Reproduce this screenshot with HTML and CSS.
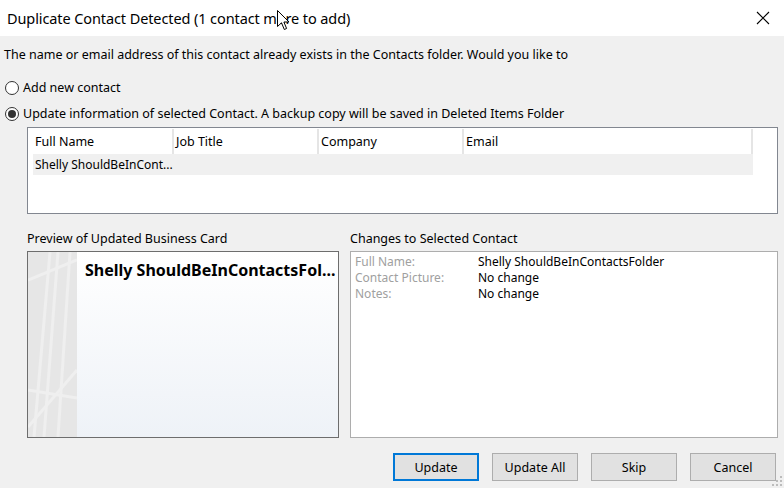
FILE: index.html
```html
<!DOCTYPE html>
<html>
<head>
<meta charset="utf-8">
<link rel="stylesheet" href="styles.css">
</head>
<body>
<div class="dialog">
  <div class="titlebar">
    <div class="title">Duplicate Contact Detected (1 contact more to add)</div>
    <svg class="close" width="14" height="14" viewBox="0 0 14 14"><path d="M1 1 L13 13 M13 1 L1 13" stroke="#000" stroke-width="1.1" fill="none"/></svg>
    <svg class="cursor" width="14" height="22" viewBox="0 0 14 22"><path d="M0.5 0.5 L0.5 16.5 L4.5 12.8 L7.3 19.5 L9.6 18.5 L6.9 12 L12 12 Z" fill="#fff" stroke="#000" stroke-width="1"/></svg>
  </div>
  <div class="body">
    <div class="prompt">The name or email address of this contact already exists in the Contacts folder. Would you like to</div>
    <div class="radio-row r1"><span class="radio"></span><span>Add new contact</span></div>
    <div class="radio-row r2"><span class="radio checked"></span><span>Update information of selected Contact. A backup copy will be saved in Deleted Items Folder</span></div>
    <div class="listbox">
      <div class="lhead">
        <div class="col first">Full Name</div>
        <div class="col">Job Title</div>
        <div class="col">Company</div>
        <div class="col last">Email</div>
      </div>
      <div class="lrow">
        <div class="col">Shelly ShouldBeInCont...</div>
      </div>
    </div>
    <div class="panels">
      <div class="panel left">
        <div class="plabel">Preview of Updated Business Card</div>
        <div class="card">
          <div class="stripe">
            <svg width="49" height="185" viewBox="0 0 49 185" preserveAspectRatio="none">
              <g stroke="#efefef" stroke-width="3" fill="none">
                <path d="M30 0 L16 185"/>
                <path d="M42 0 L30 185"/>
                <path d="M0 28 L49 8"/>
                <path d="M0 138 L49 146"/>
                <path d="M0 175 L49 118"/>
                <path d="M6 185 L22 0"/>
              </g>
            </svg>
          </div>
          <div class="cardbody">
            <div class="cname">Shelly ShouldBeInContactsFol...</div>
          </div>
        </div>
      </div>
      <div class="panel right">
        <div class="plabel">Changes to Selected Contact</div>
        <div class="changes">
          <div class="crow"><span class="k">Full Name:</span><span class="v">Shelly ShouldBeInContactsFolder</span></div>
          <div class="crow"><span class="k">Contact Picture:</span><span class="v">No change</span></div>
          <div class="crow"><span class="k">Notes:</span><span class="v">No change</span></div>
        </div>
      </div>
    </div>
    <div class="buttons">
      <button class="btn default">Update</button>
      <button class="btn">Update All</button>
      <button class="btn">Skip</button>
      <button class="btn">Cancel</button>
    </div>
    <svg class="grip" width="12" height="12" viewBox="0 0 12 12">
      <g fill="#bcbcbc">
        <rect x="8" y="0" width="2" height="2"/>
        <rect x="4" y="4" width="2" height="2"/><rect x="8" y="4" width="2" height="2"/>
        <rect x="0" y="8" width="2" height="2"/><rect x="4" y="8" width="2" height="2"/><rect x="8" y="8" width="2" height="2"/>
      </g>
    </svg>
  </div>
</div>
</body>
</html>
```
FILE: styles.css
```css
* { box-sizing: border-box; }
html, body { margin: 0; padding: 0; }
body {
  width: 784px;
  height: 488px;
  overflow: hidden;
  font-family: "Noto Sans", "Open Sans", sans-serif;
  font-size: 12.5px;
  color: #000;
  background: #f0f0f0;
}
.dialog { width: 784px; height: 488px; display: flex; flex-direction: column; }
.titlebar {
  position: relative;
  height: 36px;
  background: #fff;
  display: flex;
  align-items: center;
  padding-left: 7px;
}
.title { font-size: 14.5px; color: #000; letter-spacing: -0.1px; }
.close { position: absolute; right: 14px; top: 11px; }
.cursor { position: absolute; left: 277px; top: 10px; }
.body { position: relative; flex: 1; }
.prompt { margin: 10px 0 0 4px; line-height: 18px; height: 18px; }
.radio-row { display: flex; align-items: center; line-height: 18px; margin-left: 5px; gap: 4px; }
.r1 { margin-top: 15px; }
.r2 { margin-top: 8px; }
.radio {
  width: 14px; height: 14px; border: 1px solid #333; border-radius: 50%; background: #fff;
  display: inline-flex; align-items: center; justify-content: center;
}
.radio.checked::after { content: ""; width: 8px; height: 8px; border-radius: 50%; background: #333; }
.listbox {
  margin: 4px 0 0 27px;
  width: 751px;
  height: 87px;
  border: 1px solid #828790;
  background: #fff;
  padding: 1px 0 0 5px;
}
.lhead, .lrow { display: flex; width: 720px; }
.lhead { height: 25px; }
.lhead .col { width: 145px; border-right: 2px solid #e5e5e5; padding-left: 2px; line-height: 25px; }
.lhead .col.first { width: 141px; }
.lhead .col.last { width: 289px; }
.lrow { background: #f0f0f0; height: 21px; }
.lrow .col { padding-left: 2px; line-height: 21px; font-size: 12px; }
.panels { display: flex; gap: 11px; margin: 18px 0 0 27px; }
.plabel { line-height: 14px; height: 14px; margin-bottom: 5px; }
.panel.left { width: 312px; }
.panel.right { width: 428px; }
.card {
  display: flex;
  height: 187px;
  border: 1px solid #6d6d6d;
}
.stripe { width: 49px; background: #e6e6e6; }
.stripe svg { display: block; width: 49px; height: 185px; }
.cardbody {
  flex: 1;
  background: linear-gradient(#ffffff, #eef2f7);
  padding: 8px 0 0 8px;
}
.cname { font-weight: bold; font-size: 16px; line-height: 20px; white-space: nowrap; }
.changes {
  height: 187px;
  border: 1px solid #adadad;
  background: #fff;
  padding: 2px 0 0 4px;
  font-size: 12px;
}
.crow { display: flex; line-height: 16px; }
.k { width: 123px; color: #a0a0a0; }
.v { color: #000; }
.buttons { display: flex; justify-content: flex-end; gap: 13px; margin: 15px 8px 0 0; }
.btn {
  font-family: inherit;
  font-size: 12.5px;
  width: 86px;
  height: 28px;
  background: #e1e1e1;
  border: 1px solid #adadad;
  color: #000;
  padding: 0;
}
.btn.default { border: 2px solid #0078d7; }
.grip { position: absolute; right: 0; bottom: 0; }
```
